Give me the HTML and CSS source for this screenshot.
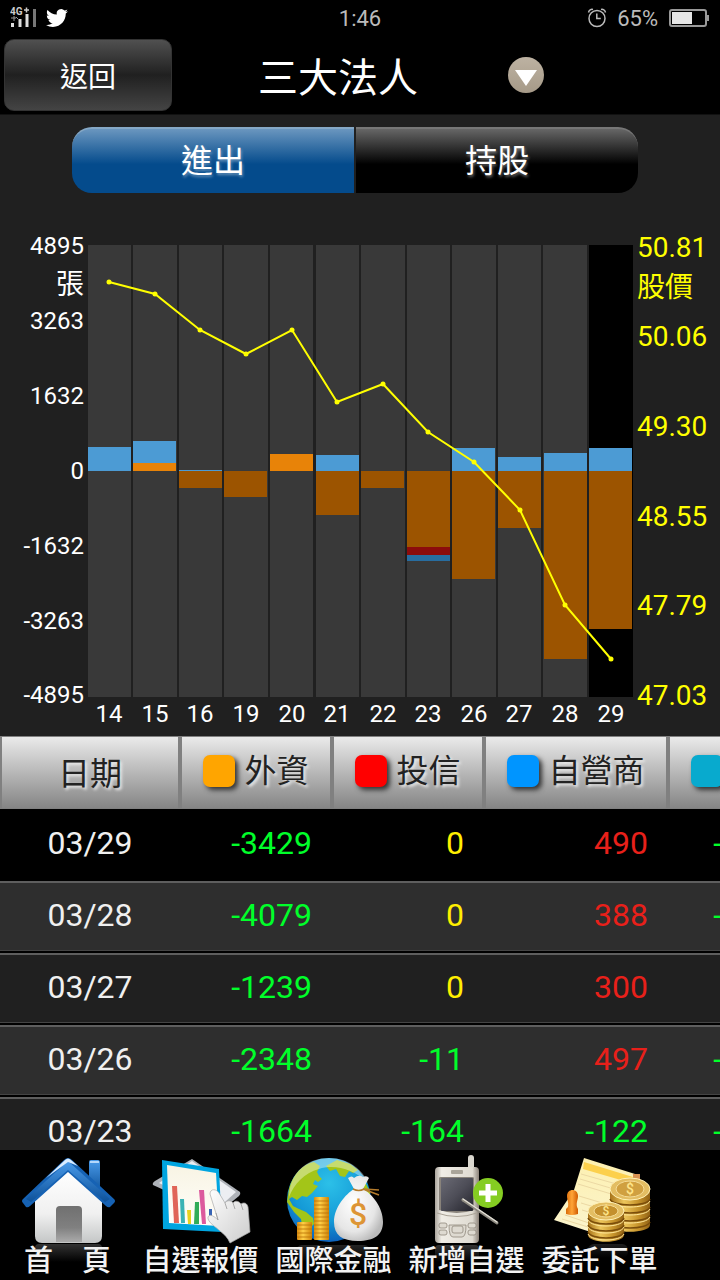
FILE: index.html
```html
<!DOCTYPE html>
<html lang="zh-Hant">
<head>
<meta charset="utf-8">
<meta name="viewport" content="width=device-width, initial-scale=1">
<title>三大法人</title>
<link rel="stylesheet" href="styles.css">
</head>
<body>
<div class="status">
  <div class="status-left">
    <svg class="signal" width="28" height="24" viewBox="0 0 28 24">
      <text x="0" y="9" font-size="10" font-weight="bold" fill="#ccc">4G</text>
      <path d="M14 4h5M16.500 1.500v5" stroke="#ccc" stroke-width="1.500"/>
      <path d="M1 12h5M4 10v5M6 11l2 2" stroke="#999" fill="none"/>
      <path d="M2.500 17v4M10 13v8M17 8v13" stroke="#ddd" stroke-width="3"/>
      <path d="M24.500 3v18" stroke="#777" stroke-width="3"/>
    </svg>
    <svg width="22" height="22" viewBox="0 0 24 24"><path fill="#fff" d="M23.950 4.570a10 10 0 0 1-2.820.77 4.960 4.960 0 0 0 2.160-2.720c-.95.55-2 .95-3.130 1.180a4.920 4.920 0 0 0-8.380 4.480C7.690 8.100 4.070 6.130 1.640 3.160a4.820 4.820 0 0 0-.67 2.480c0 1.710.87 3.210 2.190 4.100a4.900 4.900 0 0 1-2.230-.62v.06a4.920 4.920 0 0 0 3.950 4.830 5 5 0 0 1-2.210.08 4.940 4.940 0 0 0 4.600 3.420A9.870 9.870 0 0 1 0 19.540a13.990 13.990 0 0 0 7.550 2.210c9.050 0 13.990-7.500 13.990-13.980 0-.21 0-.42-.01-.63a9.940 9.940 0 0 0 2.420-2.570z"/></svg>
  </div>
  <span class="clock">1:46</span>
  <div class="status-right">
    <svg width="20" height="20" viewBox="0 0 20 20" fill="none" stroke="#bbb" stroke-width="1.500">
      <circle cx="10" cy="10.500" r="8"/>
      <path d="M9.800 5.500v5h4M1.500 4.500C2 2 4 1 6 1.500M18.500 4.500C18 2 16 1 14 1.500"/>
    </svg>
    <span>65%</span>
    <svg width="42" height="20" viewBox="0 0 42 20">
      <rect x="2" y="2" width="36" height="16" rx="2" fill="none" stroke="#999" stroke-width="2"/>
      <rect x="4" y="4" width="20" height="12" fill="#e6e6e6"/>
      <path d="M39 7h2v6h-2z" fill="#999"/>
    </svg>
  </div>
</div>

<header class="titlebar">
  <button class="back" type="button">返回</button>
  <h1>三大法人</h1>
  <button class="more" type="button" aria-label="選單">
    <svg width="36" height="36" viewBox="0 0 36 36"><path d="M7 13h22L18 29z" fill="#fff"/></svg>
  </button>
</header>

<div class="tabs">
  <button class="tab active" type="button">進出</button>
  <button class="tab" type="button">持股</button>
</div>

<svg class="chart" viewBox="0 0 720 532">
  <!-- day columns -->
  <g class="cols">
    <rect x="88" y="41" width="43" height="452"/>
    <rect x="133" y="41" width="44" height="452"/>
    <rect x="179" y="41" width="43" height="452"/>
    <rect x="224" y="41" width="44" height="452"/>
    <rect x="270" y="41" width="43" height="452"/>
    <rect x="316" y="41" width="43" height="452"/>
    <rect x="361" y="41" width="44" height="452"/>
    <rect x="407" y="41" width="43" height="452"/>
    <rect x="452" y="41" width="44" height="452"/>
    <rect x="498" y="41" width="43" height="452"/>
    <rect x="543" y="41" width="44" height="452"/>
    <rect class="today" x="589" y="41" width="44" height="452"/>
  </g>

  <!-- buy, above zero -->
  <g class="dealer">
    <rect x="88" y="243" width="43" height="24"/>
    <rect x="133" y="237" width="43" height="22"/>
    <rect x="179" y="266" width="43" height="1"/>
    <rect x="316" y="251" width="43" height="16"/>
    <rect x="452" y="244" width="43" height="23"/>
    <rect x="498" y="253" width="43" height="14"/>
    <rect x="544" y="249" width="43" height="18"/>
    <rect x="589" y="244" width="43" height="23"/>
  </g>
  <g class="foreign">
    <rect x="133" y="259" width="43" height="8"/>
    <rect x="270" y="250" width="43" height="17"/>
  </g>

  <!-- sell, below zero -->
  <g class="foreign-sell">
    <rect x="179" y="267" width="43" height="17"/>
    <rect x="224" y="267" width="43" height="26"/>
    <rect x="316" y="267" width="43" height="44"/>
    <rect x="361" y="267" width="43" height="17"/>
    <rect x="407" y="267" width="43" height="77"/>
    <rect x="452" y="267" width="43" height="108"/>
    <rect x="498" y="267" width="43" height="57"/>
    <rect x="544" y="267" width="43" height="188"/>
    <rect x="589" y="267" width="43" height="158"/>
  </g>
  <rect class="trust-sell" x="407" y="343" width="43" height="8"/>
  <rect class="dealer-sell" x="407" y="351" width="43" height="6"/>

  <!-- price -->
  <polyline class="price" points="109,78 155,90 200,126 246,150 292,126 337,198 383,180 428,228 474,258 520,306 565,401 611,455"/>
  <g class="dots">
    <circle cx="109" cy="78" r="2.500"/><circle cx="155" cy="90" r="2.500"/>
    <circle cx="200" cy="126" r="2.500"/><circle cx="246" cy="150" r="2.500"/>
    <circle cx="292" cy="126" r="2.500"/><circle cx="337" cy="198" r="2.500"/>
    <circle cx="383" cy="180" r="2.500"/><circle cx="428" cy="228" r="2.500"/>
    <circle cx="474" cy="258" r="2.500"/><circle cx="520" cy="306" r="2.500"/>
    <circle cx="565" cy="401" r="2.500"/><circle cx="611" cy="455" r="2.500"/>
  </g>

  <g class="axis-left">
    <text x="84" y="50">4895</text>
    <text class="unit" x="84" y="90">張</text>
    <text x="84" y="125">3263</text>
    <text x="84" y="200">1632</text>
    <text x="84" y="275">0</text>
    <text x="84" y="350">-1632</text>
    <text x="84" y="425">-3263</text>
    <text x="84" y="499">-4895</text>
  </g>
  <g class="axis-right">
    <text x="637" y="53">50.81</text>
    <text x="637" y="93">股價</text>
    <text x="637" y="142">50.06</text>
    <text x="637" y="232">49.30</text>
    <text x="637" y="322">48.55</text>
    <text x="637" y="411">47.79</text>
    <text x="637" y="501">47.03</text>
  </g>
  <g class="axis-days">
    <text x="109" y="518">14</text><text x="155" y="518">15</text>
    <text x="200" y="518">16</text><text x="246" y="518">19</text>
    <text x="292" y="518">20</text><text x="337" y="518">21</text>
    <text x="383" y="518">22</text><text x="428" y="518">23</text>
    <text x="474" y="518">26</text><text x="519" y="518">27</text>
    <text x="565" y="518">28</text><text x="611" y="518">29</text>
  </g>
</svg>

<div class="table-wrap">
<table>
  <colgroup><col class="c-date"><col class="c-num"><col class="c-num"><col class="c-wide"><col class="c-num"></colgroup>
  <thead>
    <tr>
      <th>日期</th>
      <th><div class="key"><i class="swatch orange"></i><span>外資</span></div></th>
      <th><div class="key"><i class="swatch red"></i><span>投信</span></div></th>
      <th><div class="key"><i class="swatch blue"></i><span>自營商</span></div></th>
      <th><div class="key"><i class="swatch teal"></i><span>合計</span></div></th>
    </tr>
  </thead>
  <tbody>
    <tr><td>03/29</td><td class="down">-3429</td><td class="flat">0</td><td class="up">490</td><td class="down">-2939</td></tr>
    <tr><td>03/28</td><td class="down">-4079</td><td class="flat">0</td><td class="up">388</td><td class="down">-3691</td></tr>
    <tr><td>03/27</td><td class="down">-1239</td><td class="flat">0</td><td class="up">300</td><td class="down">-939</td></tr>
    <tr><td>03/26</td><td class="down">-2348</td><td class="down">-11</td><td class="up">497</td><td class="down">-1862</td></tr>
    <tr><td>03/23</td><td class="down">-1664</td><td class="down">-164</td><td class="down">-122</td><td class="down">-1950</td></tr>
  </tbody>
</table>
</div>

<nav class="toolbar">
  <a href="#home">
    <svg width="100" height="92" viewBox="0 0 100 92">
      <defs>
        <linearGradient id="roof" x1="0" y1="0" x2="0" y2="1"><stop offset="0" stop-color="#4a9bea"/><stop offset="1" stop-color="#0d5199"/></linearGradient>
        <linearGradient id="wall" x1="0" y1="0" x2="0" y2="1"><stop offset="0" stop-color="#fff"/><stop offset=".6" stop-color="#f0f0f0"/><stop offset="1" stop-color="#c4c6c6"/></linearGradient>
        <linearGradient id="door" x1="0" y1="0" x2="0" y2="1"><stop offset="0" stop-color="#707070"/><stop offset=".6" stop-color="#808080"/><stop offset="1" stop-color="#aaa"/></linearGradient>
        <linearGradient id="mirror" x1="0" y1="0" x2="0" y2="1"><stop offset="0" stop-color="#333"/><stop offset="1" stop-color="#000"/></linearGradient>
      </defs>
      <rect x="17" y="92" width="67" height="18" rx="4" fill="url(#mirror)"/>
      <rect x="71" y="8" width="11" height="32" rx="2" fill="url(#roof)"/>
      <path d="M72 9h9v2h-9z" fill="#b5d8fb"/>
      <path d="M50 18l34 30v36q0 7-7 7H24q-7 0-7-7V48z" fill="url(#wall)"/>
      <path d="M38 90V58q0-4 4-4h18q4 0 4 4v32z" fill="url(#door)"/>
      <path d="M50 6q2 0 4 2l42 39q2 2 0 4l-4 4q-2 1-4-1L50 20 12 54q-2 2-4 1l-3-4q-2-2 0-4L46 8q2-2 4-2z" fill="#1662b4"/>
      <path d="M50 9l42 38-5 3-37-32-37 32-5-3z" fill="url(#roof)"/>
      <path d="M28 26L47 8q3-3 6 0l7 6-10-4z" fill="#d9ecff"/>
    </svg>
    <span>首　頁</span>
  </a>
  <a href="#quotes">
    <svg width="100" height="92" viewBox="0 0 100 92">
      <defs>
        <linearGradient id="hand" x1="0" y1="0" x2="1" y2="1"><stop offset="0" stop-color="#fff"/><stop offset="1" stop-color="#ccc"/></linearGradient>
        <linearGradient id="sheet" x1="0" y1="0" x2="0" y2="1"><stop offset="0" stop-color="#f8f4e4"/><stop offset="1" stop-color="#fffefa"/></linearGradient>
      </defs>
      <path d="M41 7l48 33q1 2-1 4L66 62 2 33q-1-2 2-4z" fill="#aeb2b8"/>
      <path d="M41 9l44 31-20 18L8 31z" fill="#eceef2"/>
      <path d="M11 8l57 9 3 63-59-3z" fill="#00a5e0"/>
      <path d="M16 13l49 8 3 53-50-3z" fill="url(#sheet)"/>
      <path d="M21 34h5l2 37h-5z" fill="#e06558"/>
      <path d="M29 47h4l1 24h-4z" fill="#3bb3b5"/>
      <path d="M36 58h4v14h-3z" fill="#e9d21f"/>
      <path d="M44 50h4v22h-5z" fill="#31ac58"/>
      <path d="M48 38h5l2 34h-4z" fill="#dc5a9d"/>
      <path d="M58 57h3v7h-3z" fill="#3764b5"/>
      <path d="M59 42c0-6 7-5 9-1l6 10c2-3 6-3 8 0 2-3 6-2 8 1 3-2 6-1 7 3l2 25-20 11c-2-5-6-9-10-12-4-4-13-9-12-14 2-4 7 0 10 3z" fill="url(#hand)" stroke="#aaa" stroke-width=".7"/>
      <path d="M74 51l2 6M82 51l2 6M90 52l2 6M67 68l-2-7" stroke="#999" fill="none" stroke-width=".8"/>
    </svg>
    <span>自選報價</span>
  </a>
  <a href="#global">
    <svg width="100" height="92" viewBox="0 0 100 92">
      <defs>
        <radialGradient id="sea" cx=".5" cy=".3" r=".75"><stop offset="0" stop-color="#2cc0e8"/><stop offset=".6" stop-color="#1499d6"/><stop offset="1" stop-color="#0c57b6"/></radialGradient>
        <linearGradient id="stack" x1="0" y1="0" x2="1" y2="0"><stop offset="0" stop-color="#d98b10"/><stop offset=".4" stop-color="#ffd048"/><stop offset="1" stop-color="#cf8208"/></linearGradient>
        <radialGradient id="bag" cx=".4" cy=".4" r=".65"><stop offset="0" stop-color="#fff"/><stop offset=".7" stop-color="#e6e6e6"/><stop offset="1" stop-color="#bbb"/></radialGradient>
      </defs>
      <rect x="12" y="93" width="74" height="17" rx="6" fill="url(#mirror)" opacity=".7"/>
      <circle cx="45" cy="48" r="42" fill="url(#sea)"/>
      <path d="M5 37C9 22 19 12 30 10l6 4-3 6 2 4 3 3-4 3-3-2-2 4 5 2-6 7-5 4-5-1-5 4-5-3-3 2 4 7 6 3 7 3 7 6 1 6-4 4-3 7-5-9-1-7-7-7-7-10z" fill="#a3c518"/>
      <path d="M42 14l11-6 13 4 8 6-5 3-4-2-4 6-5-1-4-7-6 2zM52 62l5-6 7 1 1 7-5 11-6 3zM80 28l6 12v8l-6-4z" fill="#a3c518"/>
      <path d="M5 45C6 18 25 6 45 6c20 0 34 12 39 25C70 17 50 12 35 17 20 21 10 32 5 45z" fill="#fff" opacity=".38"/>
      <rect x="13" y="70" width="15" height="18" rx="1" fill="url(#stack)"/>
      <rect x="30" y="45" width="15" height="43" rx="1" fill="url(#stack)"/>
      <path d="M13 73h15M13 77h15M13 81h15M13 85h15M30 49h15M30 53h15M30 57h15M30 61h15M30 65h15M30 69h15M30 73h15M30 77h15M30 81h15M30 85h15" stroke="#b96e05" stroke-width=".8"/>
      <path d="M64 26q4-3 6 0 5-4 9-1 4-2 6 1l-6 11c9 5 20 18 20 33 0 13-9 19-25 19S50 83 50 70c0-15 12-28 20-33z" fill="url(#bag)"/>
      <path d="M69 37q6 3 11 0l15 1M79 37l16 6" stroke="#b47b2c" stroke-width="1.500" fill="none"/>
      <text x="74" y="73" font-size="32" text-anchor="middle" fill="#dd9535">$</text>
    </svg>
    <span>國際金融</span>
  </a>
  <a href="#add">
    <svg width="100" height="92" viewBox="0 0 100 92">
      <defs>
        <linearGradient id="case" x1="0" y1="0" x2="1" y2="0"><stop offset="0" stop-color="#aaa49c"/><stop offset=".15" stop-color="#f0ede6"/><stop offset=".85" stop-color="#dfdbd2"/><stop offset="1" stop-color="#8a8178"/></linearGradient>
        <linearGradient id="lcd" x1="0" y1="0" x2="1" y2="1"><stop offset="0" stop-color="#6a6a74"/><stop offset=".5" stop-color="#4d4d57"/><stop offset="1" stop-color="#24242c"/></linearGradient>
      </defs>
      <rect x="18" y="93" width="44" height="17" rx="4" fill="url(#mirror)"/>
      <rect x="51" y="3" width="6" height="20" rx="3" fill="#d9d6ce"/>
      <rect x="18" y="15" width="44" height="76" rx="4" fill="url(#case)"/>
      <rect x="34" y="18" width="12" height="4" rx="1" fill="#aaa59a"/>
      <path d="M22 26q0-1 2-1h31q2 0 2 1v32q-17 6-35 0z" fill="#88827a"/>
      <rect x="24" y="26" width="32" height="33" rx="1" fill="url(#lcd)"/>
      <path d="M20 61q20 7 40 0" stroke="#aaa397" fill="none"/>
      <g fill="#dedad1" stroke="#8f887c" stroke-width=".8">
        <path d="M32 73h17q0 12-4 12h-9q-4 0-4-12z"/>
        <rect x="35" y="74" width="11" height="7" rx="2"/>
        <rect x="22" y="71" width="8" height="5" rx="2"/><rect x="22" y="78" width="8" height="5" rx="2"/>
        <rect x="51" y="71" width="8" height="5" rx="2"/><rect x="51" y="78" width="8" height="5" rx="2"/>
      </g>
      <circle cx="71" cy="41" r="15" fill="#85cd22"/>
      <path d="M71 32v18M62 41h18" stroke="#fff" stroke-width="5"/>
      <path d="M46 48l34 23" stroke="#8b877e" stroke-width="3" stroke-linecap="round"/>
      <path d="M46 47l34 23" stroke="#e2dfd5" stroke-width="1.500" stroke-linecap="round"/>
    </svg>
    <span>新增自選</span>
  </a>
  <a href="#order">
    <svg width="100" height="92" viewBox="0 0 100 92">
      <defs>
        <linearGradient id="note" x1="0" y1="0" x2="0" y2="1"><stop offset="0" stop-color="#fdf0b0"/><stop offset="1" stop-color="#fbf5d0"/></linearGradient>
        <linearGradient id="gold" x1="0" y1="0" x2="1" y2="0"><stop offset="0" stop-color="#a8741a"/><stop offset=".35" stop-color="#edc65c"/><stop offset=".7" stop-color="#c8952c"/><stop offset="1" stop-color="#926214"/></linearGradient>
        <linearGradient id="stamp" x1="0" y1="0" x2="1" y2="0"><stop offset="0" stop-color="#d96a08"/><stop offset=".5" stop-color="#ffa436"/><stop offset="1" stop-color="#d05a00"/></linearGradient>
      </defs>
      <rect x="38" y="92" width="40" height="14" rx="6" fill="url(#mirror)" opacity=".6"/>
      <path d="M34 6l51 16-20 66L4 68l20-30z" fill="url(#note)"/>
      <path d="M34 10l49 15-2 6-48-14z" fill="#fcd04c"/>
      <path d="M31 22l46 13M30 27l44 13M28 32l40 12M29 44l30 9M31 51l20 6M32 58l10 3M15 63l24 8M12 67l26 8" stroke="#ecd9a4" stroke-width="1"/>
      <rect x="83" y="22" width="7" height="6" fill="#d99252"/>
      <path d="M17 44c0-8 11-8 11 0 0 4-2 6-1 11l1 2v5q-6 2-12 0v-5l2-2c1-5-1-7-1-11z" fill="url(#stamp)"/>
      <path d="M60 39h40v34c0 9-40 9-40 0z" fill="url(#gold)"/>
      <path d="M60 47c3 8 37 8 40 0M60 55c3 8 37 8 40 0M60 63c3 8 37 8 40 0M60 70c3 8 37 8 40 0" stroke="#7a4d0b" stroke-width="1.500" fill="none"/>
      <path d="M60 49c3 8 37 8 40 0M60 57c3 8 37 8 40 0M60 65c3 8 37 8 40 0" stroke="#ffe79a" fill="none"/>
      <ellipse cx="80" cy="37" rx="20" ry="11" fill="#e3bd62" stroke="#fff0b5"/>
      <ellipse cx="80" cy="37" rx="14" ry="8" fill="#d0a040" stroke="#f5dc96"/>
      <text x="80" y="42" font-size="14" text-anchor="middle" fill="#ffe58a">$</text>
      <path d="M38 59h36v24c0 9-36 9-36 0z" fill="url(#gold)"/>
      <path d="M38 66c3 8 33 8 36 0M38 73c3 8 33 8 36 0M38 80c3 8 33 8 36 0" stroke="#7a4d0b" stroke-width="1.500" fill="none"/>
      <path d="M38 68c3 8 33 8 36 0M38 75c3 8 33 8 36 0M38 82c3 8 33 8 36 0" stroke="#ffe79a" fill="none"/>
      <ellipse cx="56" cy="59" rx="18" ry="9" fill="#e3bd62" stroke="#fff0b5"/>
      <ellipse cx="56" cy="59" rx="12" ry="6" fill="#c4902d" stroke="#f5dc96"/>
      <text x="56" y="63" font-size="12" text-anchor="middle" fill="#ffe58a">$</text>
    </svg>
    <span>委託下單</span>
  </a>
</nav>
</body>
</html>
```

FILE: styles.css
```css
* {
  box-sizing: border-box;
}

body {
  margin: 0;
  height: 100vh;
  display: flex;
  flex-direction: column;
  overflow: hidden;
  background: #202020;
  color: #fff;
  font-family: Roboto, "Noto Sans CJK TC", sans-serif;
}

button {
  font-family: inherit;
  color: #fff;
  border: 0;
  padding: 0;
}

/* status bar */
.status {
  flex: none;
  display: grid;
  grid-template-columns: 1fr auto 1fr;
  align-items: center;
  height: 36px;
  padding: 0 10px;
  background: #000;
  color: #bbb;
  font-size: 22px;
}
.status svg {
  display: block;
}
.status-left,
.status-right {
  display: flex;
  align-items: center;
  gap: 8px;
}
.status-right {
  justify-content: flex-end;
  gap: 10px;
}

/* title bar */
.titlebar {
  flex: none;
  display: flex;
  align-items: center;
  height: 79px;
  padding: 0 4px;
  background: #000;
  border-bottom: 1px solid #111;
}
.titlebar h1 {
  margin: 0 90px 0 86px;
  font-size: 40px;
  font-weight: 400;
}
.back {
  width: 168px;
  height: 72px;
  border: 1px solid #333;
  border-radius: 10px;
  background: linear-gradient(#505050, #202020 50%, #444);
  font-size: 28px;
}
.more {
  width: 36px;
  height: 36px;
  border-radius: 50%;
  background: linear-gradient(#bdb2a2, #a69a88);
}
.more svg {
  display: block;
}

/* tabs */
.tabs {
  flex: none;
  display: flex;
  gap: 2px;
  margin: 12px 82px 11px 72px;
}
.tab {
  flex: 1;
  height: 66px;
  padding-bottom: 6px;
  border-top: 2px solid #777;
  border-radius: 0 20px 20px 0;
  background: linear-gradient(#666, #000 55%);
  font-size: 32px;
  text-shadow: 1px 2px 3px rgba(255, 255, 255, .4);
}
.tab.active {
  border-color: #85a8c6;
  border-radius: 20px 0 0 20px;
  background: linear-gradient(#6a96bf, #044b8c 55%);
}

/* chart */
.chart {
  flex: none;
  display: block;
  width: 100%;
}
.cols { fill: #393939; }
.cols .today { fill: #000; }
.dealer { fill: #4c9bd4; }
.dealer-sell { fill: #286da0; }
.foreign { fill: #e88308; }
.foreign-sell { fill: #9c5400; }
.trust-sell { fill: #8c0c0c; }
.price {
  fill: none;
  stroke: #ff0;
  stroke-width: 2;
}
.dots { fill: #ff0; }
.axis-left {
  fill: #fff;
  font-size: 24px;
  text-anchor: end;
}
.axis-left .unit { font-size: 28px; }
.axis-right {
  fill: #ff0;
  font-size: 28px;
}
.axis-days {
  fill: #fff;
  font-size: 24px;
  text-anchor: middle;
}

/* table */
.table-wrap {
  flex: 1;
  min-height: 0;
  overflow: hidden;
}
table {
  width: 820px;
  table-layout: fixed;
  border-collapse: separate;
  border-spacing: 0;
}
.c-date { width: 180px; }
.c-num { width: 152px; }
.c-wide { width: 184px; }

th {
  height: 73px;
  padding: 0 0 4px;
  border: solid #808080;
  border-width: 1px 2px;
  background: linear-gradient(#eaeaea, #858585);
  color: #222;
  font-size: 32px;
  font-weight: 400;
  text-shadow: 2px 2px 3px #eee;
}
.key {
  display: flex;
  align-items: center;
  justify-content: center;
  gap: 9px;
}
.key span {
  padding-bottom: 6px;
}
.swatch {
  width: 32px;
  height: 32px;
  border-radius: 7px;
  box-shadow: 3px 3px 5px #333;
}
.orange { background: #ffa500; }
.red { background: #f00; }
.blue { background: #0095ff; }
.teal { background: #08aace; }

td {
  height: 72px;
  padding: 0 20px 4px 0;
  border-top: 2px solid #5e5e5e;
  border-bottom: 2px solid #000;
  box-shadow: inset 0 -1px #444;
  background: #202020;
  font-size: 32px;
  text-align: right;
}
td:first-child {
  padding-right: 0;
  color: #f0f0f0;
  text-align: center;
}
td:last-child {
  padding-right: 26px;
}
tr:nth-child(even) td {
  background: #2e2e2e;
}
tbody tr:first-child td {
  background: #000;
  border-color: #000;
  box-shadow: none;
}
.down { color: #00ff2a; }
.up { color: #e8201a; }
.flat { color: #ffee00; }

/* bottom toolbar */
.toolbar {
  flex: none;
  display: flex;
  height: 130px;
  padding: 2px 0 0 1px;
  background: #000;
  overflow: hidden;
}
.toolbar a {
  flex: 0 0 133px;
  display: flex;
  flex-direction: column;
  align-items: center;
  gap: 2px;
  color: #f2f2f2;
  font-size: 29px;
  font-weight: 500;
  line-height: 30px;
  text-decoration: none;
}
.toolbar svg {
  overflow: visible;
}
.toolbar span {
  position: relative;
}
```
